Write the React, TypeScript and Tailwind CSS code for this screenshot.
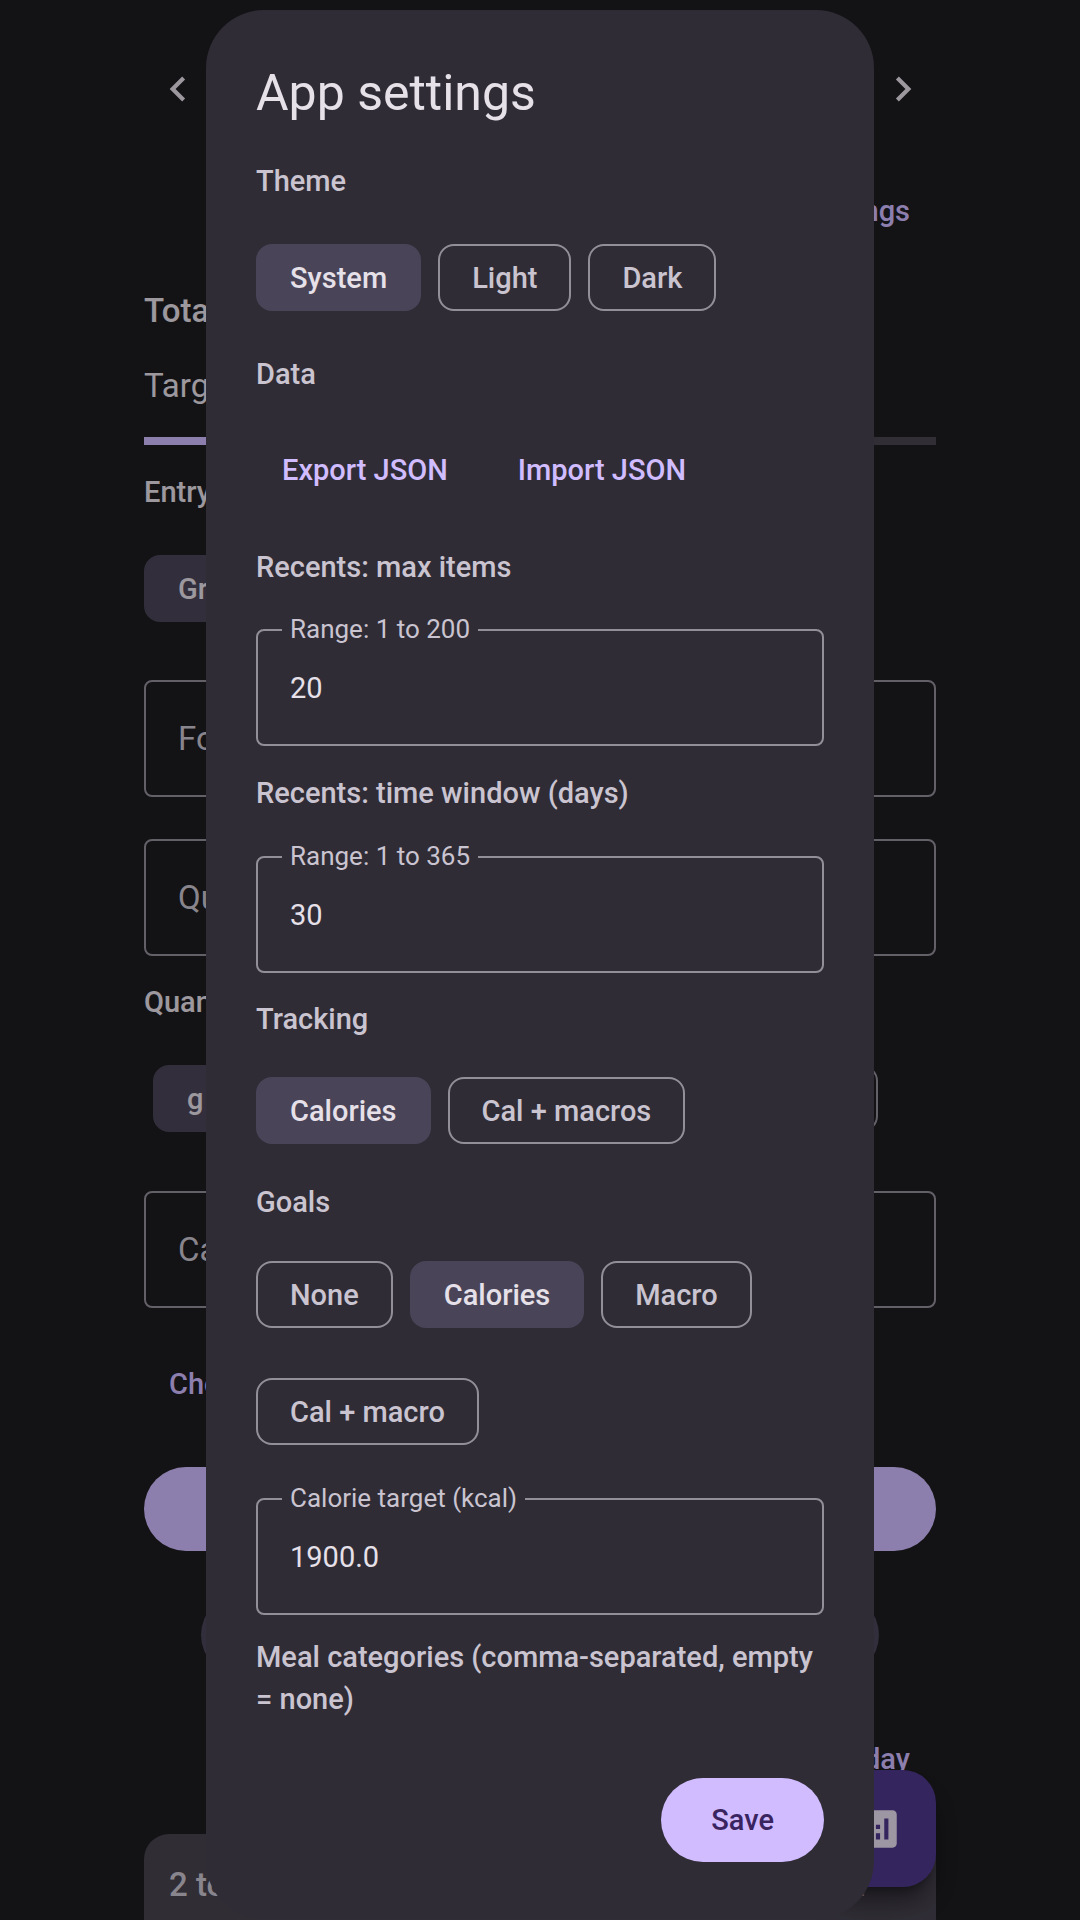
import { useState } from "react";
import type { ReactNode } from "react";
import { MdAnalytics, MdChevronLeft, MdChevronRight } from "react-icons/md";

function Chip({
  children,
  selected,
  onClick,
}: {
  children: ReactNode;
  selected?: boolean;
  onClick?: () => void;
}) {
  return (
    <button
      type="button"
      aria-pressed={!!selected}
      onClick={onClick}
      className={
        selected
          ? "h-[67px] shrink-0 rounded-2xl border-2 border-[#4a4458] bg-[#4a4458] px-8 text-[29px] leading-[42px] font-medium text-[#e6e0e9]"
          : "h-[67px] shrink-0 rounded-2xl border-2 border-[#938f99] px-8 text-[29px] leading-[42px] font-medium text-[#cac4d0]"
      }
    >
      {children}
    </button>
  );
}

function ChipGroup({
  label,
  options,
  initial,
}: {
  label: string;
  options: string[];
  initial: string;
}) {
  const [value, setValue] = useState(initial);
  return (
    <div role="group" aria-label={label} className="flex flex-wrap gap-x-[17px] gap-y-[50px] pt-[17px] pb-4">
      {options.map((option) => (
        <Chip key={option} selected={option === value} onClick={() => setValue(option)}>
          {option}
        </Chip>
      ))}
    </div>
  );
}

function SectionTitle({ children }: { children: ReactNode }) {
  return <h3 className="text-[29px] leading-[42px] font-medium text-[#cac4d0]">{children}</h3>;
}

function OutlinedField({ id, label, initial }: { id: string; label: string; initial: string }) {
  const [value, setValue] = useState(initial);
  return (
    <div className="relative">
      <input
        id={id}
        value={value}
        onChange={(event) => setValue(event.target.value)}
        className="block h-[117px] w-full rounded-lg border-2 border-[#938f99] bg-transparent px-8 text-[29px] text-[#e6e0e9] outline-none"
      />
      <label
        htmlFor={id}
        className="absolute -top-4 left-[26px] bg-[#2f2c36] px-2 text-[26px] leading-8 text-[#cac4d0]"
      >
        {label}
      </label>
    </div>
  );
}

function PlaceholderField({ label }: { label: string }) {
  return (
    <input
      aria-label={label}
      placeholder={label}
      className="block h-[117px] w-full rounded-lg border-2 border-[#938f99] bg-transparent px-8 text-[33px] outline-none placeholder:text-[#cac4d0] placeholder:opacity-100"
    />
  );
}

function DiaryPage() {
  return (
    <main className="flex h-screen flex-col overflow-hidden bg-[#1c1b1f] px-36 pt-16 text-[#e6e0e9]">
      <header className="flex shrink-0 justify-between pr-2 pl-[9px]">
        <button type="button" aria-label="Previous day">
          <MdChevronLeft size={50} />
        </button>
        <button type="button" aria-label="Next day">
          <MdChevronRight size={50} />
        </button>
      </header>
      <div className="mt-[76px] flex justify-end px-[26px]">
        <button type="button" className="text-[29px] leading-[42px] font-medium text-[#d0bcff]">
          Settings
        </button>
      </div>
      <p className="mt-[54px] text-[33px] leading-[50px] font-medium">Total</p>
      <p className="mt-[25px] text-[33px] leading-[50px]">Target</p>
      <div className="mt-[26px] flex h-2 shrink-0 bg-[#49454f]">
        <div className="w-1/2 bg-[#d0bcff]" />
      </div>
      <p className="mt-[26px] text-[29px] leading-[42px] font-medium">Entry</p>
      <div className="mt-[42px] flex shrink-0">
        <Chip selected>Grams</Chip>
      </div>
      <div className="mt-[58px] flex shrink-0 flex-col gap-[42px]">
        <PlaceholderField label="Food" />
        <PlaceholderField label="Quantity" />
      </div>
      <p className="mt-[25px] text-[29px] leading-[42px] font-medium">Quantity</p>
      <div className="mt-[42px] mr-[58px] ml-[9px] flex shrink-0 justify-between">
        <Chip selected>g</Chip>
        <Chip>ml</Chip>
      </div>
      <div className="mt-[59px] shrink-0">
        <PlaceholderField label="Calories" />
      </div>
      <div className="mt-[55px] flex shrink-0 px-[25px]">
        <button type="button" className="text-[29px] leading-[42px] font-medium text-[#d0bcff]">
          Choose
        </button>
      </div>
      <button
        type="button"
        aria-label="Add entry"
        className="mt-[62px] h-[84px] shrink-0 rounded-full bg-[#d0bcff]"
      />
      <button
        type="button"
        aria-label="Save entry"
        className="mx-[57px] mt-[42px] h-[84px] shrink-0 rounded-full bg-[#4a4458]"
      />
      <div className="mt-[61px] flex shrink-0 justify-end px-[26px]">
        <button type="button" className="text-[29px] leading-[42px] font-medium text-[#d0bcff]">
          Today
        </button>
      </div>
      <article className="mt-[54px] flex h-[160px] shrink-0 justify-between rounded-t-[25px] bg-[#47434f] pt-[26px] pr-[70px] pl-[25px] text-[33px] leading-[50px] font-medium text-[#cac4d0]">
        <span>2 toasts</span>
        <span>kcal</span>
      </article>
      <button
        type="button"
        aria-label="Statistics"
        className="fixed right-36 bottom-[33px] flex size-[117px] items-center justify-center rounded-[33px] bg-[#4f378b] text-[#e8def0] shadow-xl shadow-black/40"
      >
        <MdAnalytics size={50} />
      </button>
    </main>
  );
}

function SettingsDialog() {
  return (
    <section
      role="dialog"
      aria-modal="true"
      aria-labelledby="settings-title"
      className="w-full max-w-[668px] rounded-[58px] bg-[#2f2c36] px-[50px] pt-[50px] pb-[57px]"
    >
      <h2 id="settings-title" className="text-[50px] leading-[67px] text-[#e6e0e9]">
        App settings
      </h2>
      <div className="mt-[33px]">
        <SectionTitle>Theme</SectionTitle>
        <div className="mt-[25px]">
          <ChipGroup label="Theme" options={["System", "Light", "Dark"]} initial="System" />
        </div>
      </div>
      <div className="mt-[26px]">
        <SectionTitle>Data</SectionTitle>
        <div className="mt-[25px] flex h-[100px] items-center gap-[18px] text-[29px] leading-[42px] font-medium text-[#d0bcff]">
          <button type="button" className="px-[26px] py-5">
            Export JSON
          </button>
          <button type="button" className="px-[26px] py-5">
            Import JSON
          </button>
        </div>
      </div>
      <div className="mt-[26px]">
        <SectionTitle>Recents: max items</SectionTitle>
        <div className="mt-[41px]">
          <OutlinedField id="max-items" label="Range: 1 to 200" initial="20" />
        </div>
      </div>
      <div className="mt-[26px]">
        <SectionTitle>Recents: time window (days)</SectionTitle>
        <div className="mt-[42px]">
          <OutlinedField id="time-window" label="Range: 1 to 365" initial="30" />
        </div>
      </div>
      <div className="mt-[25px]">
        <SectionTitle>Tracking</SectionTitle>
        <div className="mt-5">
          <ChipGroup label="Tracking" options={["Calories", "Cal + macros"]} initial="Calories" />
        </div>
      </div>
      <div className="mt-[21px]">
        <SectionTitle>Goals</SectionTitle>
        <div className="mt-[21px]">
          <ChipGroup
            label="Goals"
            options={["None", "Calories", "Macro", "Cal + macro"]}
            initial="Calories"
          />
        </div>
      </div>
      <div className="mt-[37px]">
        <OutlinedField id="calorie-target" label="Calorie target (kcal)" initial="1900.0" />
      </div>
      <div className="mt-[21px]">
        <SectionTitle>Meal categories (comma-separated, empty = none)</SectionTitle>
      </div>
      <div className="mt-[58px] flex justify-end">
        <button
          type="button"
          className="h-[84px] rounded-full bg-[#d0bcff] px-[50px] text-[29px] leading-[42px] font-medium text-[#3a2460]"
        >
          Save
        </button>
      </div>
    </section>
  );
}

export default function App() {
  return (
    <div className="h-screen overflow-hidden font-[Roboto,sans-serif]">
      <DiaryPage />
      <div className="fixed inset-0 flex items-start justify-center overflow-hidden bg-black/32 pt-[10px]">
        <SettingsDialog />
      </div>
    </div>
  );
}
